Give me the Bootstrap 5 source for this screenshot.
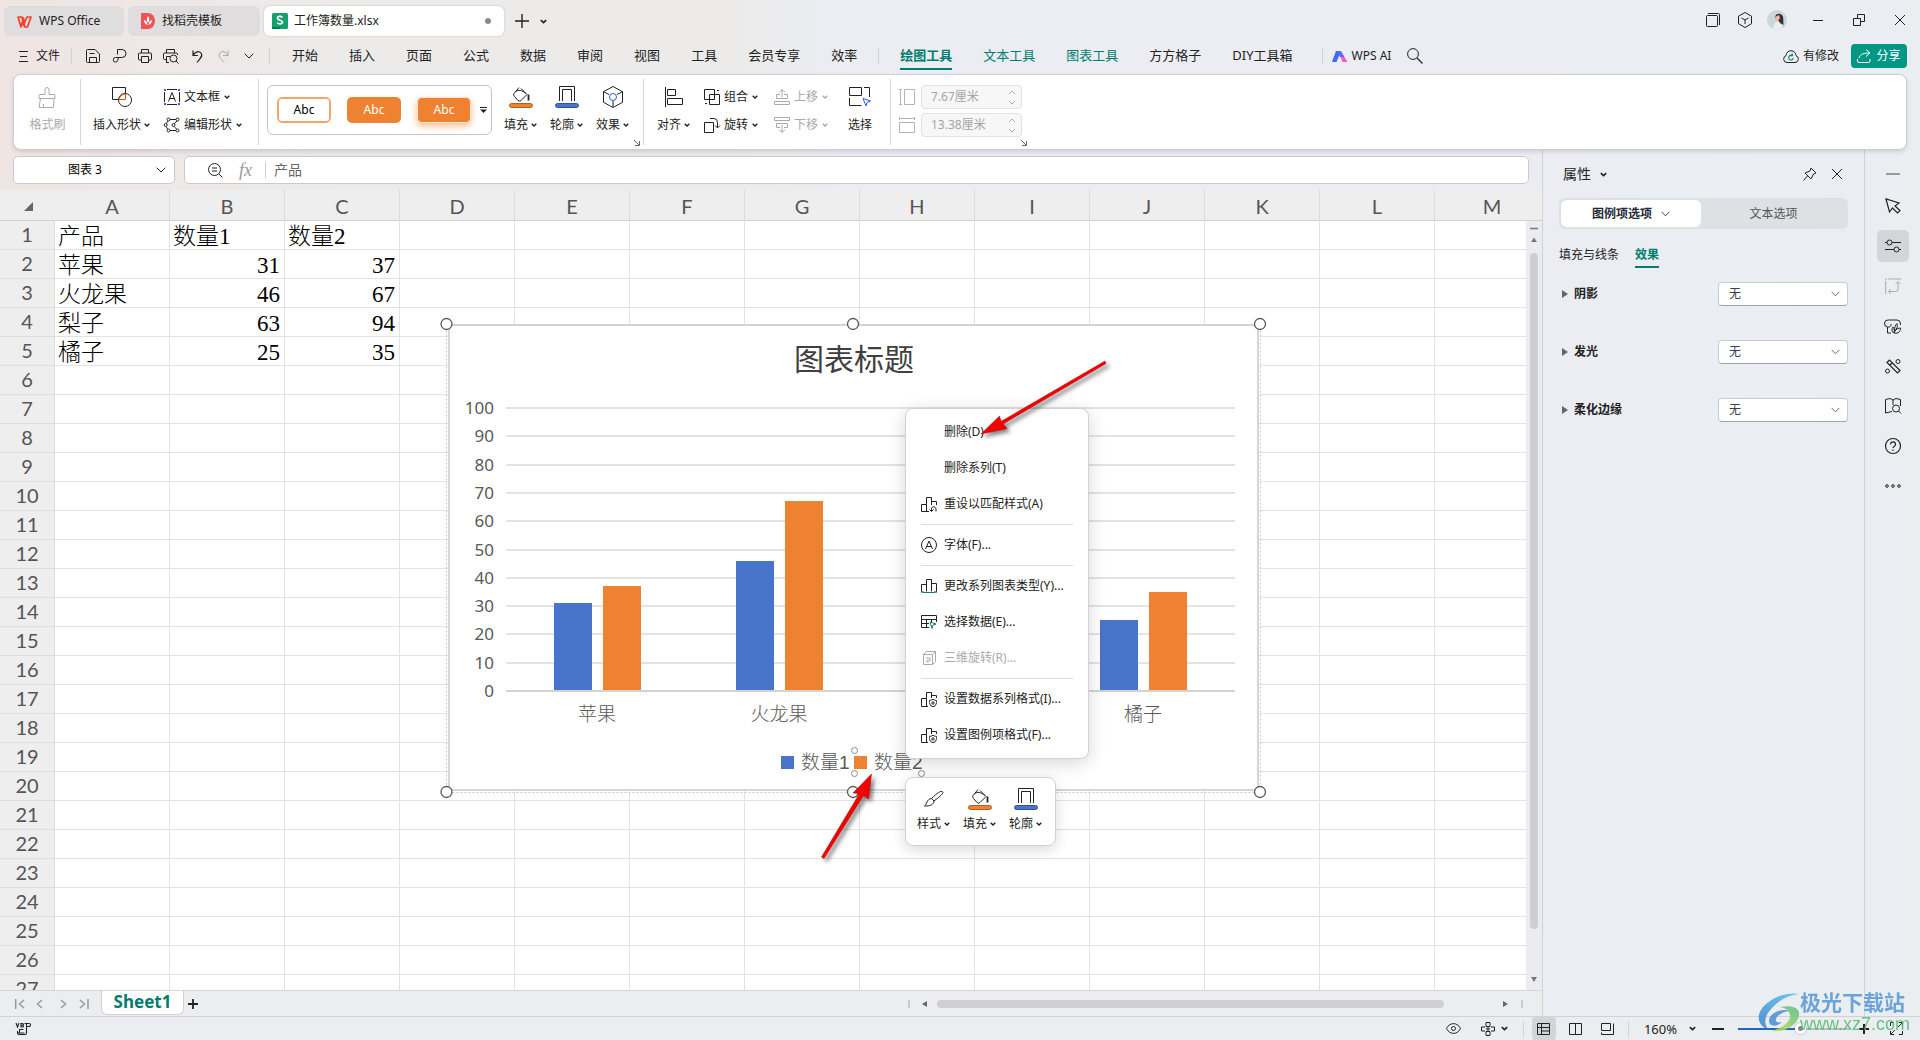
<!DOCTYPE html>
<html lang="zh-CN">
<head>
<meta charset="utf-8">
<meta name="viewport" content="width=device-width, initial-scale=1">
<title>工作簿数量.xlsx - WPS Office</title>
<link href="https://cdn.jsdelivr.net/npm/bootstrap@5.3.0/dist/css/bootstrap.min.css" rel="stylesheet">
<style>
:root{--teal:#007d6e;--orange:#ee8230;--blue:#4874cb;--line:#d0d2d6;--ink:#222;}
body{font-family:"Noto Sans","Noto Sans CJK SC",sans-serif;font-size:12px;line-height:16px;color:var(--ink);
  background:linear-gradient(90deg,#efe5e3 0,#ecebea 18%,#ecebea 38%,#ebedf3 44%,#ebedf3 80%,#eaeef1 100%);}
svg{display:block;flex:none;fill:none;stroke:currentColor;stroke-width:1;overflow:visible}
.btn{--bs-btn-font-size:12px;--bs-btn-line-height:16px;--bs-btn-color:var(--ink);--bs-btn-disabled-color:#aaa;--bs-btn-disabled-opacity:1;
  display:flex;align-items:center;justify-content:center;padding:0;border:0;white-space:nowrap}
.vsep{width:1px;height:16px;background:var(--line);flex:none}
/* title bar */
.titlebar{height:40px;padding:6px 0 4px 4px}
.doctab{height:30px;border-radius:6px;background:#dfdddd;padding-left:13px;display:flex;align-items:center;gap:7px;color:#222;text-decoration:none}
.doctab.current{background:#fff;box-shadow:0 0 2px #b5b5b8;padding-left:8px;gap:6px}
.winbtn{width:41px;height:28px}
.winbtn.slim{width:32px}
/* menu bar */
.menubar{height:32px}
.quick{width:26px;height:28px}
.menutab{font-size:13px;line-height:26px;color:#222;text-decoration:none;white-space:nowrap;border-bottom:2px solid transparent}
.menutab.tool{color:var(--teal)}
.menutab.current{font-weight:700;border-color:var(--teal)}
.share{background:#009785;color:#fff;width:56px;height:24px;border-radius:4px;gap:5px}
/* ribbon */
.ribbon{height:76px;margin:2px 13px 0;background:#fff;border:1px solid #cfcfd3;border-radius:8px;box-shadow:0 2px 4px rgba(0,0,0,.12);position:relative;z-index:3}
.rgroup{position:relative;padding-top:8px;display:flex;align-items:flex-start}
.rgroup:not(:last-child)::after{content:"";position:absolute;right:0;top:4px;bottom:4px;width:1px;background:#d6d6d8}
.tall{flex-direction:column}
.tall .pic{height:28px;display:flex;align-items:center}
.rowline{height:28px;display:flex;align-items:center;gap:4px}
.tall .rowline{gap:3px}
.launch{position:absolute;right:4px;bottom:3px}
.gallery{height:50px;width:225px;border:1px solid #c4c4c8;border-radius:6px;margin:2px 12px 0 8px;padding-left:9px;display:flex;align-items:center}
.sample{width:54px;height:26px;border-radius:5px;background:var(--orange);color:#fff}
.sample.outline{background:#fff;border:1px solid #f3a56a;box-shadow:inset 0 0 0 1px #f3a56a;color:#000}
.sample.glow{border:1px solid #fde6d5;box-shadow:0 3px 7px rgba(238,130,48,.55)}
.spinbox{width:101px;height:24px;border:1px solid #e2e2e4;border-radius:4px;background:#f7f7f7;display:flex;align-items:center;color:#aaa}
.spinbox input{width:86px;background:none;border:0;padding:0 0 0 9px;font-size:12px;color:#a5a5a5}
/* formula bar */
.formula{height:42px;padding:7px 13px 0}
.fbox{height:28px;background:#fff;border:1px solid #c9cacd;border-radius:5px;display:flex;align-items:center}
.fbox input{border:0;background:none;padding:0;min-width:0;flex:1}
/* sheet */
.sheetwrap{position:relative;overflow:hidden;background:#fff}
.cells{table-layout:fixed;border-collapse:separate;border-spacing:0;width:1550px;font-size:23px;line-height:26px;color:#000;
  font-family:"Liberation Serif","Noto Sans CJK SC",serif;font-weight:300}
.cells th{font:400 20px/24px Lato,sans-serif;color:#555;text-align:center;background:#eee;padding:0;border-right:1px solid #dcdcdc;border-bottom:1px solid #dcdcdc}
.cells thead th{height:31px;padding-top:2px;border-bottom-color:#d0d0d0}
.cells tbody th{height:29px;padding-bottom:2px}
.cells td{height:29px;padding:4px 4px 0 3px;line-height:24px;border-right:1px solid #e2e2e2;border-bottom:1px solid #e2e2e2;white-space:nowrap;overflow:hidden}
.cells td.num{text-align:right}
.corner{border-right-color:#eee!important}
.floating{position:absolute}
.chartbox{left:448px;top:134px;width:811px;height:467px;background:#fff;border:2px solid #d6d6d6}
.chartbox text{stroke:none;fill:#595959}
.chartbox .val{font:17px "Noto Sans",sans-serif;text-anchor:end}
.chartbox .cat{font:300 19px "Liberation Sans","Noto Sans CJK SC",sans-serif;text-anchor:middle}
.chartbox .leg{font:300 19px "Liberation Sans","Noto Sans CJK SC",sans-serif}
.chartbox .ttl{font:400 30px "Noto Sans CJK SC",sans-serif;text-anchor:middle;fill:#404040}
.overlay{left:0;top:0;pointer-events:none}
.overlay.front{z-index:6}
.popmenu{left:905px;top:218px;width:184px;padding:5px 0;margin:0;border:1px solid #d2d2d4;border-radius:8px;background:#fff;box-shadow:0 4px 18px rgba(0,0,0,.16);z-index:4}
.popmenu .dropdown-item{height:36px;padding:0 0 0 15px;display:flex;align-items:center;gap:7px;font-size:12px;color:#222}
.popmenu .dropdown-item.disabled{color:#aaa}
.popmenu .dropdown-item.bare{padding-left:38px}
.popmenu hr{height:1px;margin:2px 15px;border:0;background:#dcdcdc;opacity:1}
.minibar{left:905px;top:587px;width:151px;height:69px;border:1px solid #d2d2d4;border-radius:8px;background:#fff;box-shadow:0 4px 14px rgba(0,0,0,.15);z-index:5;padding:7px 11px 0;display:flex;gap:13px}
.minibar .rowline{height:22px;gap:3px}
.vbar{width:17px;border-right:1px solid var(--line);background:#ebecf0;color:#777;padding-bottom:8px}
.vbar .cap{height:31px;background:#eee;border-bottom:1px solid #d0d0d0;width:100%}
.vthumb{width:8px;border-radius:4px;background:#cfcfd3;margin-bottom:48px}
/* sheet tabs */
.tabbar{height:26px;border-top:1px solid #d6d6d6;border-right:1px solid var(--line);background:#ecedef;color:#999}
.sheettab{width:83px;height:24px;margin-left:12px;margin-top:-2px;background:#fff;border:1px solid #d2d2d4;border-top:0;border-radius:0 0 6px 6px;font-weight:700;font-size:17px;line-height:22px;color:var(--teal);text-decoration:none;text-align:center}
.hthumb{width:507px;height:8px;border-radius:4px;background:#cfcfd1}
/* property panel */
.panel{flex:0 0 321px;padding:14px 16px 0 16px}
.seg{height:31px;background:#dee1e4;border-radius:6px;padding:2px}
.seg .btn{flex:1;border-radius:6px;color:#555}
.seg .btn.current{background:#fff;color:#1f2937;font-weight:700;flex:0 0 140px;gap:9px}
.proptab{color:#222;text-decoration:none;line-height:22px;border-bottom:2px solid transparent}
.proptab.current{color:var(--teal);font-weight:700;border-color:var(--teal)}
.proprow{height:58px}
.proprow label{font-weight:700;gap:6px;display:flex;align-items:center;color:#222}
.proprow .form-select{width:130px;height:24px;padding:0 24px 0 10px;font-size:12px;line-height:16px;color:#374151;border-color:#c9cbcf;border-bottom-color:#a0a2a6;border-radius:4px;
  background-image:url("data:image/svg+xml,%3csvg xmlns='http://www.w3.org/2000/svg' viewBox='0 0 10 6'%3e%3cpath fill='none' stroke='%23555' d='M.7.7 5 5 9.3.7'/%3e%3c/svg%3e");background-size:9px 6px;background-position:right 7px center}
.rail{flex:0 0 56px;border-left:1px solid var(--line);padding-top:9px;color:#333}
.rail .btn{width:32px;height:32px;border-radius:5px;margin-bottom:8px}
.rail .btn.current{background:#d3d6d9}
/* status bar */
.status{height:24px;border-top:1px solid var(--line);background:#ebedf1}
.status .view{width:24px;height:23px}
.status .view.current{background:#d2d4d7;border-radius:3px}
.zoomer{-webkit-appearance:none;appearance:none;width:112px;height:2px;background:linear-gradient(90deg,#1e66c9 56%,#bbb 56%);margin:0}
.zoomer::-webkit-slider-thumb{-webkit-appearance:none;width:11px;height:11px;border-radius:50%;background:radial-gradient(#888 0 2px,#fff 3px);box-shadow:0 0 2px #888}
.stamp{position:fixed;right:10px;bottom:6px;z-index:9;display:flex;align-items:center;opacity:.85;pointer-events:none}
.stamp .big{font-size:21px;line-height:24px;font-weight:700;color:#5797d3}
.stamp .site{font-size:18px;line-height:20px;color:#4dbd6e;font-family:"Liberation Sans",sans-serif}
</style>
<script src="https://cdn.jsdelivr.net/npm/bootstrap@5.3.0/dist/js/bootstrap.bundle.min.js"></script>
</head>
<body class="vh-100 d-flex flex-column overflow-hidden">

<svg width="0" height="0" class="position-absolute" aria-hidden="true">
  <symbol id="chev" viewBox="0 0 6 4"><path d="M.7.8 3 3 5.300.8" stroke-width="1.4"/></symbol>
  <symbol id="chevL" viewBox="0 0 10 6"><path d="M.7.7 5 5 9.300.7"/></symbol>
  <symbol id="bucket" viewBox="0 0 24 22"><path d="M10 1.500 5 7.500Q4 9 5.500 10.500L9 14.500q1.500 1.200 3 0L18 8.500 12 2.500M7 5.500c2-2 6-1.500 10 2"/><path d="M19.500 8.500v6" stroke-width="1.800"/><rect x=".5" y="17.500" width="23" height="4" rx="2" fill="#ee8230" stroke="#b3611f"/></symbol>
  <symbol id="frame" viewBox="0 0 24 22"><path d="M4.500 15V.500h15V15M7.500 15V3.500h9V15"/><rect x=".5" y="17.500" width="23" height="4" rx="2" fill="#4874cb" stroke="#33539a"/></symbol>
  <symbol id="gear" viewBox="0 0 8 8"><path d="M4 .200l1.500.8 2 .4.300 2-.6 1.500-1.200 2L4 7.800l-2-.9-1.200-2L.200 3.400l.3-2 2-.4z" fill="#fff"/><circle cx="4" cy="4" r="1.200"/></symbol>
  <symbol id="launch" viewBox="0 0 7 7"><path d="M1 1l5 5M6.500 2v4.500H2" stroke="#666"/></symbol>
</svg>

<header>
  <div class="titlebar d-flex align-items-start">
    <a href="#" class="doctab" style="width:120px"><svg width="15" height="13" viewBox="0 0 15 13"><path d="M1 2h4l1.500 8L10 2h4l-3.500 10H7.500L6.500 3 4 12z" stroke="#f0412b" stroke-width="1.700" stroke-linejoin="round"/></svg>WPS Office</a>
    <a href="#" class="doctab ms-1" style="width:132px"><svg width="14" height="16" viewBox="0 0 14 16"><path d="M0 0h7a7 8 0 0 1 0 16H0z" fill="#ee5358" stroke="none"/><path d="M7 3c2 3 1.500 5 0 7-1.500-2-1.500-4 0-7zM3 7c2 .5 3 2 3.500 5C4 11 3 9.500 3 7zm8 0c-2 .5-3 2-3.500 5C10 11 11 9.500 11 7z" fill="#fff" stroke="none"/></svg>找稻壳模板</a>
    <a href="#" class="doctab current ms-1" style="width:240px"><svg width="16" height="16" viewBox="0 0 16 16"><rect width="16" height="16" rx="1.500" fill="#13a06b" stroke="none"/><path d="M0 14h8v2H0z" fill="#0b7a50" stroke="none"/><path d="M10.500 4.500C9 3 5.500 3 5.500 5.200c0 2.500 5 1.500 5 3.900 0 2.100-3.700 2.300-5.200.6" stroke="#fff" stroke-width="1.700"/></svg>工作簿数量.xlsx<svg class="ms-auto" style="margin-right:13px" width="6" height="6" viewBox="0 0 6 6"><circle cx="3" cy="3" r="3" fill="#8c8c8c" stroke="none"/></svg></a>
    <button class="btn" aria-label="新建" style="width:36px;height:30px"><svg width="14" height="14" viewBox="0 0 14 14"><path d="M7 0v14M0 7h14" stroke-width="1.400"/></svg></button>
    <button class="btn" aria-label="更多" style="height:30px"><svg width="7" height="5"><use href="#chev"/></svg></button>
    <div class="d-flex ms-auto">
      <button class="btn winbtn slim" aria-label="标签"><svg width="14" height="14" viewBox="0 0 14 14"><rect x=".5" y="2.500" width="11" height="11" rx="1"/><path d="M2 .500h10.500q1 0 1 1V12"/></svg></button>
      <button class="btn winbtn slim" aria-label="应用"><svg width="14" height="16" viewBox="0 0 14 16"><path d="M7 .500l6.500 3.700v7.500L7 15.500.500 11.700V4.200zM3.500 6 7 8l3.500-2M7 8v4"/></svg></button>
      <button class="btn winbtn slim me-1" aria-label="账户"><svg width="20" height="20" viewBox="0 0 20 20"><circle cx="10" cy="10" r="10" fill="#c9d7dc" stroke="none"/><path d="M6 19c0-5 2-7 5-8l4 4v3.500a10 10 0 0 1-9 .5z" fill="#e8eef0" stroke="none"/><path d="M8 8c0-4 4-5.500 7-3 2 2 1 6 1.500 10L13 13l-2-3z" fill="#3a2f33" stroke="none"/><path d="M8 7l4-2 1 3-2 3H9z" fill="#e8b8a8" stroke="none"/></svg></button>
      <button class="btn winbtn" aria-label="最小化"><svg width="10" height="10" viewBox="0 0 10 10"><path d="M0 5.500h10"/></svg></button>
      <button class="btn winbtn" aria-label="还原"><svg width="12" height="12" viewBox="0 0 12 12"><path d="M.5 4.500h7v7h-7zM4.500 4.500v-4h7v7h-4"/></svg></button>
      <button class="btn winbtn" aria-label="关闭"><svg width="10" height="10" viewBox="0 0 10 10"><path d="M0 0l10 10M10 0 0 10"/></svg></button>
    </div>
  </div>

  <nav class="menubar d-flex align-items-center">
    <button class="btn gap-2" style="margin:0 11px 0 19px"><svg width="9" height="11" viewBox="0 0 9 11"><path d="M0 .500h9M1 5.500h7M0 10.500h9"/></svg>文件</button>
    <span class="vsep me-2"></span>
    <button class="btn quick" aria-label="保存"><svg width="14" height="14" viewBox="0 0 14 14"><path d="M.5 12V1.500q0-1 1-1H9L13.500 5v7.500q0 1-1 1h-11q-1 0-1-1zM3.500 13.500v-5h7v5M3.500 4.500h5"/></svg></button>
    <button class="btn quick" aria-label="输出为PDF"><svg width="13" height="14" viewBox="0 0 13 14"><path d="M4.500 5.500v-5H9a3.500 3.500 0 0 1 0 8H2.500a2.300 2.300 0 1 0 2.300 2.800L5.500 8"/></svg></button>
    <button class="btn quick" aria-label="打印"><svg width="14" height="14" viewBox="0 0 14 14"><path d="M3.500 4V.500h7V4M3.500 11h-2q-1 0-1-1V5q0-1 1-1h11q1 0 1 1v5q0 1-1 1h-2M3.500 7.500h7v6h-7z"/></svg></button>
    <button class="btn quick" aria-label="打印预览"><svg width="16" height="15" viewBox="0 0 16 15"><path d="M3.500 4V.500h8V4M3.500 10.500h-2q-1 0-1-1V5q0-1 1-1h12q1 0 1 1v1M3.500 14V7.500H7M6 13.500H3.500"/><circle cx="10.500" cy="9.500" r="3.500"/><path d="M13 12l2.500 2.500"/></svg></button>
    <button class="btn quick" aria-label="撤销"><svg width="11" height="13" viewBox="0 0 11 13"><path d="M1 .500v5h5M1 5.500C3 1.500 7 .500 9 3c2.500 3-1 5.500-4 9.500" stroke-width="1.200"/></svg></button>
    <button class="btn quick" aria-label="恢复" disabled><svg width="11" height="13" viewBox="0 0 11 13"><path d="M10 .500v5H5M10 5.500C8 1.500 4 .500 2 3c-2.500 3 1 5.500 4 9.500"/></svg></button>
    <button class="btn quick" aria-label="自定义"><svg width="10" height="6"><use href="#chevL"/></svg></button>
    <span class="vsep" style="margin:0 22px 0 7px"></span>
    <div class="d-flex" style="gap:31px">
      <a class="menutab" href="#">开始</a><a class="menutab" href="#">插入</a><a class="menutab" href="#">页面</a><a class="menutab" href="#">公式</a><a class="menutab" href="#">数据</a><a class="menutab" href="#">审阅</a><a class="menutab" href="#">视图</a><a class="menutab" href="#">工具</a><a class="menutab" href="#">会员专享</a><a class="menutab" href="#">效率</a>
    </div>
    <span class="vsep" style="margin:0 21px"></span>
    <div class="d-flex" style="gap:31px">
      <a class="menutab tool current" href="#">绘图工具</a><a class="menutab tool" href="#">文本工具</a><a class="menutab tool" href="#">图表工具</a><a class="menutab" href="#">方方格子</a><a class="menutab" href="#">DIY工具箱</a>
    </div>
    <span class="vsep" style="margin:0 9px 0 29px"></span>
    <button class="btn gap-1"><svg width="16" height="11" viewBox="0 0 16 11" stroke="none"><path d="M4 0h5L4.500 11H0z" fill="#3c6cf5" stroke="none"/><path d="M5 0h4l3.500 6H8z" fill="#5b6df8" stroke="none"/><path d="M8.500 6h4l3 5h-5z" fill="#f75bc1" stroke="none"/></svg>WPS AI</button>
    <button class="btn" aria-label="搜索" style="margin-left:16px"><svg width="16" height="16" viewBox="0 0 16 16"><circle cx="6" cy="6" r="5.400"/><path d="M10 10l5.500 5.500" stroke-width="1.200"/></svg></button>
    <button class="btn gap-1 ms-auto me-2 pe-1"><svg width="16" height="13" viewBox="0 0 16 13"><path d="M4 12.500a3.500 3.500 0 0 1-1-6.800 5 5 0 0 1 10 0 3.500 3.500 0 0 1-1 6.800z"/><path d="M10.300 8.500a2.400 2.400 0 1 1-1-3M9 3.500l.5 2-2 .5" stroke="#008a6c" stroke-width="1.200"/></svg>有修改</button>
    <button class="btn share" style="margin-right:13px"><svg width="14" height="14" viewBox="0 0 14 14"><path d="M9 .500l4 3.500-4 3.500M13 4C7 4 3 5 2 9M.500 10v2q0 1.500 1.500 1.500h9.500q1.500 0 1.500-1.500v-2"/></svg>分享</button>
  </nav>

  <section class="ribbon d-flex">
    <div class="rgroup justify-content-center" style="width:67px">
      <button class="btn tall" disabled><span class="pic"><svg width="18" height="21" viewBox="0 0 18 21"><path d="M7 7.500V2.500q0-2 2-2t2 2v5h5q1 0 1 1v3H1v-3q0-1 1-1zM2.500 11.500 1 20.500h14.500l.5-9M5.500 17v3.500"/></svg></span><span class="rowline">格式刷</span></button>
    </div>
    <div class="rgroup" style="width:178px;padding-left:12px">
      <button class="btn tall"><span class="pic"><svg width="20" height="20" viewBox="0 0 20 20"><path d="M13.500 6V.500H.500v12h6"/><circle cx="13" cy="13" r="6.500"/><path d="M13.500 7v5.500H7c.5-3 3-5.500 6.500-5.500z" stroke="#d2531c" fill="#fff"/></svg></span><span class="rowline">插入形状<svg width="6" height="4"><use href="#chev"/></svg></span></button>
      <div style="margin-left:14px">
        <button class="btn rowline"><svg width="16" height="16" viewBox="0 0 16 16"><path d="M3 .500h10M3 15.500h10M.500 3v10M15.500 3v10"/><path d="M4.500 12.500 8 3.500l3.500 9M5.700 9.500h4.600"/><path d="M0 0h2v2H0zM14 0h2v2h-2zM0 14h2v2H0zM14 14h2v2h-2z" fill="#2f5be0" stroke="none"/></svg>文本框<svg width="6" height="4"><use href="#chev"/></svg></button>
        <button class="btn rowline"><svg width="16" height="16" viewBox="0 0 16 16"><path d="M5 2.500h7M5 13.500h7M4 4 2 7M2 9.500l2 3M13 4 10 7M10 9.500l3 3"/><g fill="#fff"><circle cx="4.500" cy="2.500" r="1.500"/><circle cx="13.500" cy="2.500" r="1.500"/><circle cx="1.700" cy="8" r="1.500"/><circle cx="9.500" cy="8" r="1.500"/><circle cx="4.500" cy="13.500" r="1.500"/><circle cx="13.500" cy="13.500" r="1.500"/></g></svg>编辑形状<svg width="6" height="4"><use href="#chev"/></svg></button>
      </div>
    </div>
    <div class="rgroup" style="width:385px">
      <div class="gallery">
        <button class="btn sample outline">Abc</button>
        <button class="btn sample" style="margin:0 16px">Abc</button>
        <button class="btn sample glow">Abc</button>
        <button class="btn ms-auto me-1" aria-label="更多样式"><svg width="7" height="6" viewBox="0 0 7 6"><path d="M0 .500h7"/><path d="M0 2.500h7L3.500 6z" fill="currentColor" stroke="none"/></svg></button>
      </div>
      <div class="d-flex" style="gap:13px">
        <button class="btn tall"><span class="pic"><svg width="24" height="22"><use href="#bucket"/></svg></span><span class="rowline">填充<svg width="6" height="4"><use href="#chev"/></svg></span></button>
        <button class="btn tall"><span class="pic"><svg width="24" height="22"><use href="#frame"/></svg></span><span class="rowline">轮廓<svg width="6" height="4"><use href="#chev"/></svg></span></button>
        <button class="btn tall"><span class="pic"><svg width="20" height="22" viewBox="0 0 20 22"><path d="M10 .500l9.500 5.200v10.600L10 21.500.500 16.300V5.700zM.500 5.700 6 8.500M19.500 5.700 14 8.500M10 15v6"/><circle cx="10" cy="11" r="3.500" stroke="#2f5be0"/></svg></span><span class="rowline">效果<svg width="6" height="4"><use href="#chev"/></svg></span></button>
      </div>
      <svg class="launch" width="7" height="7"><use href="#launch"/></svg>
    </div>
    <div class="rgroup" style="width:247px;padding-left:13px">
      <button class="btn tall"><span class="pic"><svg width="18" height="20" viewBox="0 0 18 20"><path d="M.5 0v20M2.500 2.500h8v6h-8zM2.500 11.500h15v6h-15z"/></svg></span><span class="rowline">对齐<svg width="6" height="4"><use href="#chev"/></svg></span></button>
      <div style="margin-left:14px">
        <button class="btn rowline"><svg width="16" height="16" viewBox="0 0 16 16"><path d="M.5.500h10v10H.500zM5.500 5.500h10v10h-10zM13 1.500h2M1 14.500h2"/></svg>组合<svg width="6" height="4"><use href="#chev"/></svg></button>
        <button class="btn rowline"><svg width="16" height="16" viewBox="0 0 16 16"><path d="M.5 5.500h9v10h-9zM6 1.500h4q3.500 0 3.500 4v5M11 8.500l2.500 2.500L16 8.500"/></svg>旋转<svg width="6" height="4"><use href="#chev"/></svg></button>
      </div>
      <div style="margin-left:16px">
        <button class="btn rowline" disabled><svg width="16" height="16" viewBox="0 0 16 16"><path d="M8 8V.500M5 3.500l3-3 3 3M6 5.500H2.500v4h11v-4H10M.500 12.500h15v3H.500z"/></svg>上移<svg width="6" height="4"><use href="#chev"/></svg></button>
        <button class="btn rowline" disabled><svg width="16" height="16" viewBox="0 0 16 16"><path d="M8 8v7.500M5 12.500l3 3 3-3M6 10.500H2.500v-4h11v4H10M.500.500h15v3H.500z"/></svg>下移<svg width="6" height="4"><use href="#chev"/></svg></button>
      </div>
      <button class="btn tall" style="margin-left:20px"><span class="pic"><svg width="22" height="20" viewBox="0 0 22 20"><path d="M.5 8.500v-8h12v8zM15 .500h5.500V10M.500 11v7.500h12"/><path d="M14 11.500 21.500 14l-3.500 1.500-1 3.500z" stroke="#2f5be0" fill="#fff"/></svg></span><span class="rowline">选择</span></button>
    </div>
    <div class="rgroup" style="width:140px;padding-left:8px">
      <div class="d-flex flex-column gap-1" style="margin-top:2px">
        <div class="d-flex align-items-center" style="gap:6px;color:#b4b4b4"><svg width="16" height="16" viewBox="0 0 16 16"><path d="M0 .500h3M0 15.500h3M1.500 1v14M5.500.500h10v15h-10z"/></svg><span class="spinbox"><input value="7.67厘米" aria-label="高度" disabled><svg width="8" height="15" viewBox="0 0 8 15"><path d="M1 4l3-3 3 3M1 11l3 3 3-3"/></svg></span></div>
        <div class="d-flex align-items-center" style="gap:6px;color:#b4b4b4"><svg width="16" height="16" viewBox="0 0 16 16"><path d="M.5 0v3M15.500 0v3M1 1.500h14M.500 5.500h15v10H.500z"/></svg><span class="spinbox"><input value="13.38厘米" aria-label="宽度" disabled><svg width="8" height="15" viewBox="0 0 8 15"><path d="M1 4l3-3 3 3M1 11l3 3 3-3"/></svg></span></div>
      </div>
      <svg class="launch" width="7" height="7"><use href="#launch"/></svg>
    </div>
  </section>
</header>

<main class="d-flex flex-grow-1" style="min-height:0;margin-top:-1px">
  <div class="d-flex flex-column flex-grow-1" style="min-width:0">
    <div class="formula d-flex" style="border-right:1px solid var(--line);gap:9px">
      <div class="fbox" style="width:162px"><input class="text-center" style="padding-left:8px" value="图表 3" aria-label="名称框"><button class="btn px-2" aria-label="名称列表"><svg width="10" height="6"><use href="#chevL"/></svg></button></div>
      <div class="fbox flex-grow-1" style="padding-left:23px">
        <button class="btn" aria-label="查找"><svg width="15" height="15" viewBox="0 0 15 15"><circle cx="6.500" cy="6.500" r="6"/><path d="M11 11l3.500 3.500M4 5h5M4 8h5"/></svg></button>
        <button class="btn" aria-label="插入函数" style="margin:0 13px 0 16px;font:italic 18px/20px 'Liberation Serif',serif;color:#999">fx</button>
        <span class="vsep" style="margin-right:8px"></span>
        <input style="font-size:14px;color:#666" value="产品" aria-label="编辑栏">
      </div>
    </div>

    <div class="d-flex flex-grow-1" style="min-height:0">
      <div class="sheetwrap flex-grow-1" style="min-width:0">
        <table class="cells">
          <colgroup id="cols"><col style="width:55px"></colgroup>
          <thead><tr id="heads"><th class="corner"><svg class="ms-4" width="9" height="9" viewBox="0 0 9 9"><path d="M9 0v9H0z" fill="#666" stroke="none"/></svg></th></tr></thead>
          <tbody id="body"></tbody>
        </table>

        <div class="floating chartbox">
          <svg id="chart" width="807" height="463" viewBox="450 327 807 463"></svg>
        </div>

        <!-- selection frame and handles -->
        <svg class="floating overlay" width="1300" height="700" viewBox="0 191 1300 700">
          <path d="M446.500 325.500h814v468h-814z" stroke="#c9c9c9" stroke-dasharray="2 2"/>
          <g fill="#fff" stroke="#595959" stroke-width="1.300"><circle cx="446.500" cy="325" r="5.500"/><circle cx="853" cy="325" r="5.500"/><circle cx="1260" cy="325" r="5.500"/><circle cx="446.500" cy="793" r="5.500"/><circle cx="853" cy="793" r="5.500"/><circle cx="1260" cy="793" r="5.500"/></g>
          <g fill="#fff" stroke="#8a8a8a"><circle cx="854.500" cy="751.500" r="3"/><circle cx="854.500" cy="774.500" r="3"/><circle cx="921.500" cy="774.500" r="3"/></g>
        </svg>

        <div class="floating popmenu" role="menu">
          <a class="dropdown-item bare" href="#">删除(D)</a>
          <a class="dropdown-item bare" href="#">删除系列(T)</a>
          <a class="dropdown-item" href="#"><svg width="16" height="15" viewBox="0 0 16 15"><path d="M8 14.500H.500v-7h5v7V.500h5V8M10.500 4.500h5V8M8.500 12.500l2 2 2-2M10.500 14V12c0-3 4-3 4.500 0v2.500"/></svg>重设以匹配样式(A)</a>
          <hr>
          <a class="dropdown-item" href="#"><svg width="16" height="16" viewBox="0 0 16 16"><circle cx="8" cy="8" r="7.500"/><path d="M4.500 12 8 4l3.500 8M5.800 9.500h4.400"/></svg>字体(F)...</a>
          <hr>
          <a class="dropdown-item" href="#"><svg width="16" height="14" viewBox="0 0 16 14"><path d="M.5 12.500v-7h5M5.500 12.500V.500h5v12M10.500 4.500h5v8M3 13H0M13 13h3"/><path d="M2 13.500h12" stroke="#13805a"/></svg>更改系列图表类型(Y)...</a>
          <a class="dropdown-item" href="#"><svg width="16" height="14" viewBox="0 0 16 14"><path d="M8 12.500H.500V.500h15V7M.500 4.500h15M.500 8.500H8M5.500 4.500v8M10.500 4.500V7"/><path d="M9 7l6 2-3 1-1 3.500z" stroke="#13805a"/></svg>选择数据(E)...</a>
          <a class="dropdown-item disabled" href="#" aria-disabled="true"><svg width="16" height="14" viewBox="0 0 16 14"><path d="M2.500 3.500h9v10h-9zM2.500 3.500l3-3h9l-3 3M14.500.500v10l-3 3M5 7h4v3H6M7 8.500 5.500 10 7 11.500"/></svg>三维旋转(R)...</a>
          <hr>
          <a class="dropdown-item" href="#"><svg width="16" height="15" viewBox="0 0 16 15"><path d="M7 14.500H.500v-8h5v8V.500h5V6M10.500 3.500h5V6"/><use href="#gear" x="8" y="7" width="8" height="8"/></svg>设置数据系列格式(I)...</a>
          <a class="dropdown-item" href="#"><svg width="16" height="15" viewBox="0 0 16 15"><path d="M7 14.500H.500v-8h5v8V.500h5V6M10.500 3.500h5V6"/><use href="#gear" x="8" y="7" width="8" height="8"/></svg>设置图例项格式(F)...</a>
        </div>

        <div class="floating minibar">
          <button class="btn tall justify-content-start"><span class="pic"><svg width="20" height="16" viewBox="0 0 20 16"><path d="M18.500.700c1.500 1-.5 3.300-8.500 9.300L7.500 7.500C13 2 17-.500 18.500.700zM7.500 7.500 10 10c-.5 4-4 5-9.500 5C3 13.500 2.500 8 7.500 7.500z"/></svg></span><span class="rowline">样式<svg width="6" height="4"><use href="#chev"/></svg></span></button>
          <button class="btn tall justify-content-start"><span class="pic"><svg width="24" height="22"><use href="#bucket"/></svg></span><span class="rowline">填充<svg width="6" height="4"><use href="#chev"/></svg></span></button>
          <button class="btn tall justify-content-start"><span class="pic"><svg width="24" height="22"><use href="#frame"/></svg></span><span class="rowline">轮廓<svg width="6" height="4"><use href="#chev"/></svg></span></button>
        </div>

        <!-- callout arrows -->
        <svg class="floating overlay front" width="1300" height="700" viewBox="0 191 1300 700">
          <g fill="#f50000" stroke="#b00000" stroke-width=".5" style="filter:drop-shadow(3px 3px 2px rgba(0,0,0,.5))">
            <path d="M981 435 999.500 417 1001 422.500 1105 362 1106 364.500 1003 425 1007 429.500z"/>
            <path d="M871.500 775 868.500 800 863.500 796.500 824 859.500 821.500 858 859.500 794.500 853 794z"/>
          </g>
        </svg>
      </div>
      <div class="vbar d-flex flex-column align-items-center">
        <div class="cap"></div>
        <svg width="8" height="14" viewBox="0 0 8 14" style="margin:7px 0 11px"><path d="M0 .500h8" stroke-width="1.500"/><path d="M1 14l3-4.500L7 14z" fill="currentColor" stroke="none"/></svg>
        <div class="vthumb flex-grow-1"></div>
        <svg width="6" height="5" viewBox="0 0 6 5"><path d="M0 0h6L3 5z" fill="currentColor" stroke="none"/></svg>
      </div>
    </div>

    <div class="tabbar d-flex align-items-center">
      <svg style="margin-left:15px" width="74" height="10" viewBox="0 0 74 10"><path d="M.7 0v10M9 1 4.500 5 9 9M27 1l-4.500 4L27 9M46 1l4.500 4L46 9M65 1l4.500 4L65 9M73 0v10" stroke-width="1.500"/></svg>
      <a href="#" class="sheettab">Sheet1</a>
      <button class="btn ms-1" aria-label="新建工作表"><svg width="10" height="10" viewBox="0 0 10 10"><path d="M5 0v10M0 5h10" stroke-width="1.800"/></svg></button>
      <div class="d-flex align-items-center ms-auto" style="margin-right:19px">
        <svg width="20" height="8" viewBox="0 0 20 8"><path d="M1 0v8" stroke="#aaa"/><path d="M19 1v6l-5-3z" fill="#666" stroke="none"/></svg>
        <div class="hthumb" style="margin:0 58px 0 9px"></div>
        <svg width="21" height="8" viewBox="0 0 21 8"><path d="M1 1v6l5-3z" fill="#666" stroke="none"/><path d="M20 0v8" stroke="#aaa"/></svg>
      </div>
    </div>
  </div>

  <aside class="panel d-flex flex-column">
    <div class="d-flex align-items-center ps-1" style="height:22px;font-size:14px">属性<svg style="margin-left:9px" width="7" height="5"><use href="#chev"/></svg>
      <button class="btn ms-auto" aria-label="固定"><svg width="14" height="14" viewBox="0 0 14 14"><path d="M8 1l5 5-2.500 1L8 12 2 6l5-2zM4.500 9 .500 13.500"/></svg></button>
      <button class="btn" aria-label="关闭" style="margin:0 6px 0 15px"><svg width="10" height="10" viewBox="0 0 10 10"><path d="M0 0l10 10M10 0 0 10"/></svg></button>
    </div>
    <div class="seg d-flex" style="margin-top:13px"><button class="btn current">图例项选项<svg width="9" height="6"><use href="#chevL"/></svg></button><button class="btn">文本选项</button></div>
    <div class="d-flex gap-3" style="margin-top:15px"><a href="#" class="proptab">填充与线条</a><a href="#" class="proptab current">效果</a></div>
    <div style="margin-top:-3px">
      <div class="proprow d-flex align-items-center justify-content-between"><label for="shadow"><svg style="margin-left:3px" width="6" height="8" viewBox="0 0 6 8"><path d="M0 0v8l6-4z" fill="#666" stroke="none"/></svg>阴影</label><select id="shadow" class="form-select"><option>无</option></select></div>
      <div class="proprow d-flex align-items-center justify-content-between"><label for="glowsel"><svg style="margin-left:3px" width="6" height="8" viewBox="0 0 6 8"><path d="M0 0v8l6-4z" fill="#666" stroke="none"/></svg>发光</label><select id="glowsel" class="form-select"><option>无</option></select></div>
      <div class="proprow d-flex align-items-center justify-content-between"><label for="soft"><svg style="margin-left:3px" width="6" height="8" viewBox="0 0 6 8"><path d="M0 0v8l6-4z" fill="#666" stroke="none"/></svg>柔化边缘</label><select id="soft" class="form-select"><option>无</option></select></div>
    </div>
  </aside>

  <div class="rail d-flex flex-column align-items-center">
    <button class="btn mb-0" style="height:32px" aria-label="收起"><svg width="14" height="2" viewBox="0 0 14 2"><path d="M0 1h14" stroke="#999" stroke-width="2"/></svg></button>
    <button class="btn" aria-label="选择"><svg width="16" height="16" viewBox="0 0 16 16"><path d="M1 1l3.500 13 3-4 5 5 2.500-2.500-5-4.500L14 5z" stroke-width="1.200"/></svg></button>
    <button class="btn current" aria-label="属性"><svg width="16" height="14" viewBox="0 0 16 14"><path d="M0 3.500h2M7 3.500h9M0 10.500h9M14 10.500h2" stroke-width="1.200"/><circle cx="4.500" cy="3.500" r="2.500"/><circle cx="11.500" cy="10.500" r="2.500"/></svg></button>
    <button class="btn" disabled aria-label="变换"><svg width="16" height="16" viewBox="0 0 16 16"><path d="M0 1h2M3 1h13M.700 3v13M4 13.500h7q2 0 2-2V4M6 11l-2.500 2.500L6 16M10.500 6 13 3.500 15.500 6"/></svg></button>
    <button class="btn" aria-label="素材"><svg width="16" height="15" viewBox="0 0 16 15"><path d="M6 14H2.500V8A3.300 3.300 0 0 1 3.500 1H12q3.500 0 3.500 4v1M2.500 8c2.500.5 4-1 3.500-3"/><path d="M8.500 14c-2-2-2-4-.5-6 1.500 2 1.800 4 .5 6zM9.500 12c0-4 1-6 2.500-7.500 1 2.500 0 5.500-2.500 7.500zM9.500 14.300c0-3 2.500-5 6-5.300 0 4-2.500 5.500-6 5.300z"/></svg></button>
    <button class="btn" aria-label="工具"><svg width="16" height="15" viewBox="0 0 16 15"><path d="M2 3.500 4.500 1 15 11.500 12.500 14zM5 6l2.500-2.500" stroke-width="1.200"/><circle cx="13" cy="2.500" r="2"/><circle cx="2.500" cy="12" r="2"/></svg></button>
    <button class="btn" aria-label="查阅"><svg width="16" height="16" viewBox="0 0 16 16"><path d="M7 13.500.500 15V1.500L5 .500 8 2l3-1.500 4.500 1V8M8 2v5"/><circle cx="11" cy="10.500" r="3.500"/><path d="M13.500 13l2.500 2.500"/></svg></button>
    <button class="btn" aria-label="帮助"><svg width="16" height="16" viewBox="0 0 16 16"><circle cx="8" cy="8" r="7.500" stroke-width="1.200"/><path d="M5.500 6.500c0-3.500 5-3.500 5 0 0 2-2.500 2-2.500 3.500M8 11.500v1.500" stroke-width="1.200"/></svg></button>
    <button class="btn" aria-label="更多"><svg width="16" height="4" viewBox="0 0 16 4"><circle cx="2" cy="2" r="1.300"/><circle cx="8" cy="2" r="1.300"/><circle cx="14" cy="2" r="1.300"/></svg></button>
  </div>
</main>

<footer class="status d-flex align-items-center">
  <button class="btn" aria-label="宏" style="margin-left:16px"><svg width="15" height="12" viewBox="0 0 15 12"><path d="M0 0l1.500 4L3 0M5 4V.500h1.500q1 0 1 1l-1 .7q1 .3 1 1T6.500 4zM8.500.500H13a1.500 1.500 0 0 1 0 3h-2M10.500.500V10q0 1.500-1.500 1.500H3q-1.500 0-1.500-1.500h7M3.500 10V6.500h4M1.500 10V8" stroke-width="1.100"/></svg></button>
  <div class="d-flex align-items-center ms-auto" style="margin-right:17px">
    <button class="btn" aria-label="护眼"><svg width="15" height="11" viewBox="0 0 15 11"><path d="M.500 5.500C3.500-1 11.500-1 14.500 5.500c-3 6.500-11 6.500-14 0z"/><circle cx="7.500" cy="5.500" r="2"/></svg></button>
    <button class="btn" aria-label="定位" style="margin:0 15px 0 20px;gap:6px"><svg width="14" height="14" viewBox="0 0 14 14"><path d="M5 .500h4v4H5zM5 9.500h4v4H5zM4 5H.500v4H4M10 5h3.500v4H10M5 7h4M7 5v4"/></svg><svg width="7" height="5"><use href="#chev"/></svg></button>
    <span class="vsep me-2"></span>
    <button class="btn view current" aria-label="普通视图"><svg width="13" height="12" viewBox="0 0 13 12"><path d="M.500.500h12v11H.500zM.500 4.500h12M4.500.500v11M4.500 8h8"/></svg></button>
    <button class="btn view mx-2" aria-label="分页预览"><svg width="13" height="12" viewBox="0 0 13 12"><path d="M.500.500h12v11H.500zM6.500.500v11"/></svg></button>
    <button class="btn view" aria-label="阅读视图"><svg width="13" height="12" viewBox="0 0 13 12"><path d="M.500.500h9v7h-9zM12.500.500v11H.500V9.500"/></svg></button>
    <span class="vsep" style="margin:0 15px 0 8px"></span>
    <button class="btn gap-3" style="font-size:13px;margin-right:16px"><span>160%</span><svg style="margin-left:-4px" width="7" height="5"><use href="#chev"/></svg></button>
    <button class="btn" aria-label="缩小"><svg width="12" height="2" viewBox="0 0 12 2"><path d="M0 1h12" stroke-width="2"/></svg></button>
    <input type="range" class="zoomer" style="margin:0 9px 0 14px" min="0" max="100" value="56" aria-label="缩放">
    <button class="btn" aria-label="放大"><svg width="10" height="10" viewBox="0 0 10 10"><path d="M5 0v10M0 5h10" stroke-width="2"/></svg></button>
    <button class="btn" aria-label="全屏" style="margin-left:21px"><svg width="13" height="13" viewBox="0 0 13 13"><path d="M.500 4V.500H4M9 .500h3.500V4M12.500 9v3.500H9M4 12.500H.500V9M8 5l4-4M5 8l-4 4"/></svg></button>
  </div>
</footer>

<div class="stamp">
  <svg width="42" height="40" viewBox="0 0 42 40" stroke="none">
    <defs><linearGradient id="ga" x1="1" y1="0" x2="0" y2="1"><stop offset="0" stop-color="#56c8ee"/><stop offset="1" stop-color="#3b7dcc"/></linearGradient><linearGradient id="gb" x1="1" y1="0" x2="0" y2="1"><stop offset="0" stop-color="#4dbd8a"/><stop offset="1" stop-color="#d2de45"/></linearGradient></defs>
    <path d="M42 2C22-2-2 14 1 28c1 5 5 8 9 9-5-6-3-15 6-23C24 6 32 3 42 2z" fill="url(#ga)" stroke="none"/>
    <path d="M22 15c10-2 20 0 19 8-1 9-13 18-28 16 12-3 20-10 19-16-1-5-5-7-10-8z" fill="url(#gb)" stroke="none"/>
    <path d="M31 19c-7-3-20 2-20 10 0 5 7 7 13 1-4 1-7 0-6-3 1-4 7-7 13-8z" fill="#4c8fd4" stroke="none"/>
  </svg>
  <div><div class="big">极光下载站</div><div class="site">www.xz7.com</div></div>
</div>

<script>
// worksheet
const data = [['产品','数量1','数量2'],['苹果',31,37],['火龙果',46,67],['梨子',63,94],['橘子',25,35]];
const letters = 'ABCDEFGHIJKLM'.split('');
document.getElementById('cols').innerHTML += letters.map(() => '<col style="width:115px">').join('');
document.getElementById('heads').innerHTML += letters.map(l => `<th scope="col">${l}</th>`).join('');
let rows = '';
for (let r = 0; r < 27; r++) {
  rows += `<tr><th scope="row">${r + 1}</th>` + letters.map((_, c) => {
    const v = data[r] && data[r][c] !== undefined ? data[r][c] : '';
    return `<td${typeof v === 'number' ? ' class="num"' : ''}>${v}</td>`;
  }).join('') + '</tr>';
}
document.getElementById('body').innerHTML = rows;

// clustered column chart
const y0 = 692, unit = 2.83, x0 = 506, x1 = 1235, step = (x1 - x0) / 4;
let s = '<text class="ttl" x="854" y="371">图表标题</text>';
for (let v = 0; v <= 100; v += 10) {
  const y = Math.round(y0 - v * unit);
  s += `<path d="M${x0} ${y}H${x1}" stroke="${v ? '#e3e3e3' : '#d3d3d3'}" stroke-width="2"/><text class="val" x="494" y="${y + 6}">${v}</text>`;
}
data.slice(1).forEach(([name, a, b], i) => {
  const x = Math.round(x0 + step * i + 47.5);
  const ya = Math.round(y0 - a * unit), yb = Math.round(y0 - b * unit);
  s += `<rect x="${x}" y="${ya}" width="38" height="${y0 - 1 - ya}" fill="#4874cb" stroke="none"/>`;
  s += `<rect x="${x + 49}" y="${yb}" width="38" height="${y0 - 1 - yb}" fill="#ee8230" stroke="none"/>`;
  s += `<text class="cat" x="${x + 43}" y="722">${name}</text>`;
});
s += '<rect x="781" y="757" width="13" height="13" fill="#4874cb" stroke="none"/><text class="leg" x="801" y="770">数量1</text>';
s += '<rect x="854" y="757" width="13" height="13" fill="#ee8230" stroke="none"/><text class="leg" x="874" y="770">数量2</text>';
document.getElementById('chart').innerHTML = s;
</script>
</body>
</html>
